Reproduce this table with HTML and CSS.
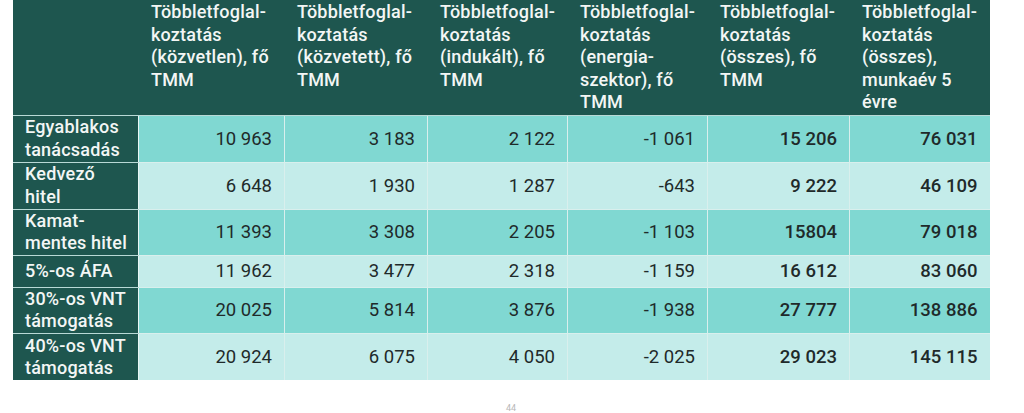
FILE: index.html
```html
<!DOCTYPE html>
<html lang="hu">
<head>
<meta charset="utf-8">
<link rel="stylesheet" href="styles.css">
</head>
<body>
<div class="page">
<table class="jobs">
<colgroup>
<col class="c-label"><col class="c-a"><col class="c-b"><col class="c-c"><col class="c-d"><col class="c-e"><col class="c-f">
</colgroup>
<thead>
<tr class="head">
<th></th>
<th>Többletfoglal-<br>koztatás<br>(közvetlen), fő<br>TMM</th>
<th>Többletfoglal-<br>koztatás<br>(közvetett), fő<br>TMM</th>
<th>Többletfoglal-<br>koztatás<br>(indukált), fő<br>TMM</th>
<th>Többletfoglal-<br>koztatás<br>(energia-<br>szektor), fő<br>TMM</th>
<th>Többletfoglal-<br>koztatás<br>(összes), fő<br>TMM</th>
<th>Többletfoglal-<br>koztatás<br>(összes),<br>munkaév 5<br>évre</th>
</tr>
</thead>
<tbody>
<tr class="dark r1">
<th>Egyablakos<br>tanácsadás</th>
<td>10&nbsp;963</td><td>3&nbsp;183</td><td>2&nbsp;122</td><td>-1&nbsp;061</td><td class="sum">15&nbsp;206</td><td class="sum">76&nbsp;031</td>
</tr>
<tr class="light r2">
<th>Kedvező<br>hitel</th>
<td>6&nbsp;648</td><td>1&nbsp;930</td><td>1&nbsp;287</td><td>-643</td><td class="sum">9&nbsp;222</td><td class="sum">46&nbsp;109</td>
</tr>
<tr class="dark r3">
<th>Kamat-<br>mentes hitel</th>
<td>11&nbsp;393</td><td>3&nbsp;308</td><td>2&nbsp;205</td><td>-1&nbsp;103</td><td class="sum">15804</td><td class="sum">79&nbsp;018</td>
</tr>
<tr class="light r4">
<th>5%-os ÁFA</th>
<td>11&nbsp;962</td><td>3&nbsp;477</td><td>2&nbsp;318</td><td>-1&nbsp;159</td><td class="sum">16&nbsp;612</td><td class="sum">83&nbsp;060</td>
</tr>
<tr class="dark r5">
<th>30%-os VNT<br>támogatás</th>
<td>20&nbsp;025</td><td>5&nbsp;814</td><td>3&nbsp;876</td><td>-1&nbsp;938</td><td class="sum">27&nbsp;777</td><td class="sum">138&nbsp;886</td>
</tr>
<tr class="light r6">
<th>40%-os VNT<br>támogatás</th>
<td>20&nbsp;924</td><td>6&nbsp;075</td><td>4&nbsp;050</td><td>-2&nbsp;025</td><td class="sum">29&nbsp;023</td><td class="sum">145&nbsp;115</td>
</tr>
</tbody>
</table>
<div class="pageno">44</div>
</div>
</body>
</html>
```

FILE: styles.css
```css
html, body {
  margin: 0;
  padding: 0;
  background: #ffffff;
}

.page {
  width: 1024px;
  height: 413px;
  overflow: hidden;
  padding-left: 13px;
  box-sizing: border-box;
  font-family: Roboto, "Liberation Sans", sans-serif;
}

.jobs {
  border-collapse: collapse;
  table-layout: fixed;
  width: 976px;
}

.c-label { width: 125px; }
.c-a { width: 146px; }
.c-b { width: 143px; }
.c-c { width: 140px; }
.c-d { width: 140px; }
.c-e { width: 142px; }
.c-f { width: 140px; }

.jobs th,
.jobs td {
  border: 1.5px solid #d9efed;
  padding: 0 12px;
}

.head th {
  background: #1e564f;
  color: #f3f6f5;
  font-weight: 500;
  font-size: 18px;
  line-height: 22.6px;
  letter-spacing: 0.2px;
  text-align: left;
  vertical-align: top;
  padding-top: 1px;
  height: 115px;
  box-sizing: border-box;
  border-top: none;
  border-color: #1e564f;
  border-bottom-color: #b9d9d6;
}

.jobs tbody th {
  background: #1e564f;
  color: #f3f6f5;
  font-weight: 500;
  font-size: 18px;
  line-height: 22.6px;
  letter-spacing: 0.2px;
  text-align: left;
  vertical-align: middle;
  padding: 0 10px 0 11px;
  border-left-color: #1e564f;
  border-top-color: #b9d9d6;
  border-bottom-color: #b9d9d6;
  border-right-color: #e9f6f5;
}

.jobs td {
  font-size: 18.5px;
  color: #1f2a2a;
  text-align: right;
  vertical-align: middle;
  font-weight: 400;
}

.jobs td.sum {
  font-weight: 500;
}

.dark td { background: #80d8d2; }
.light td { background: #c4ecea; }

.jobs td:last-child { border-right: none; }

.r1 { height: 47px; }
.r2 { height: 47px; }
.r3 { height: 46px; }
.r4 { height: 32px; }
.r5 { height: 46px; }
.r6 { height: 47px; }

.jobs tbody tr:last-child th,
.jobs tbody tr:last-child td { border-bottom: none; }

.pageno {
  margin-top: 24px;
  width: 976px;
  text-align: center;
  font-size: 9px;
  line-height: 9px;
  color: #b8b8b8;
  padding-left: 20px;
  box-sizing: border-box;
}
```
